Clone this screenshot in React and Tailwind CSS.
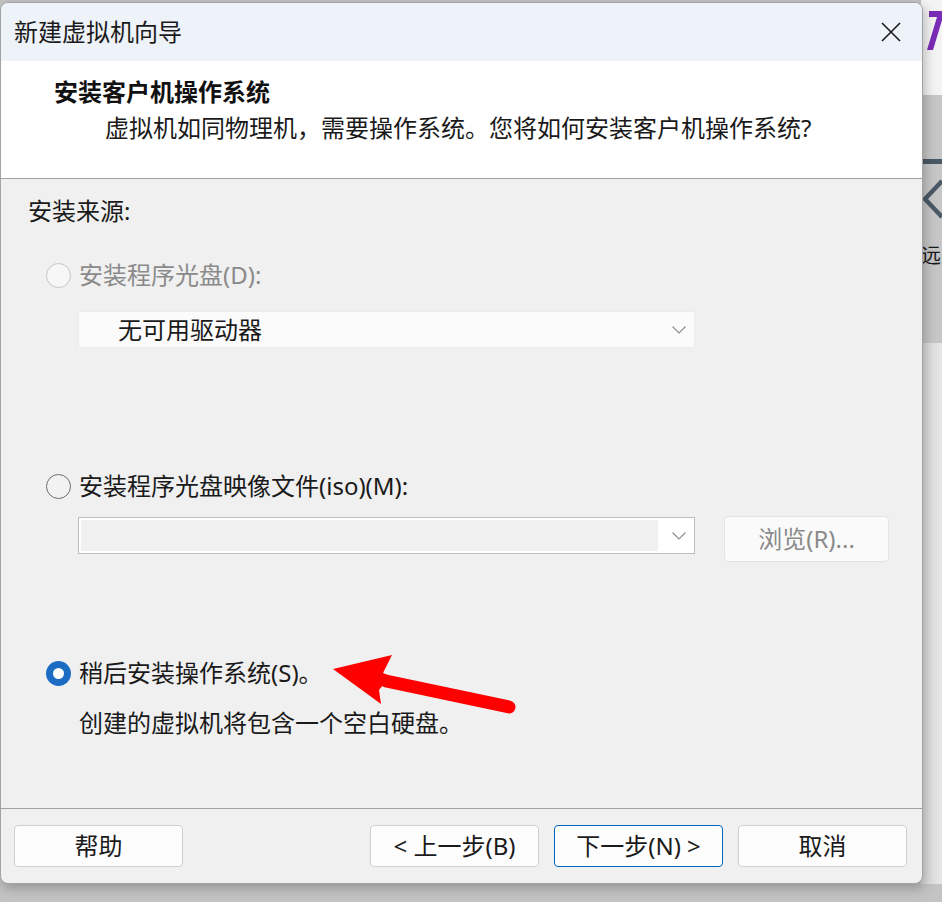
import React from "react";

function Radio({ state }) {
  if (state === "selected") {
    return (
      <span className="w-[25px] h-[25px] rounded-full bg-[#1d6cc4] flex items-center justify-center shrink-0">
        <span className="w-[11px] h-[11px] rounded-full bg-white" />
      </span>
    );
  }
  if (state === "disabled") {
    return <span className="w-[25px] h-[25px] rounded-full border-[1.5px] border-[#c6c6c6] bg-[#f7f7f7] shrink-0" />;
  }
  return <span className="w-[25px] h-[25px] rounded-full border-[1.5px] border-[#6e6e6e] bg-[#f2f2f2] shrink-0" />;
}

function Chevron() {
  return (
    <svg width="14" height="8" viewBox="0 0 14 8" className="shrink-0">
      <polyline points="0.5,0.5 7,7 13.5,0.5" fill="none" stroke="#8c8c8c" strokeWidth="1.1" />
    </svg>
  );
}

function Btn({ children, primary }) {
  return (
    <div
      className={
        "h-[42px] w-[169px] rounded-[4px] bg-[#fdfdfd] flex items-center justify-center text-[24px] text-[#1a1a1a] " +
        (primary ? "border border-[#0067c0]" : "border border-[#d0d0d0]")
      }
    >
      {children}
    </div>
  );
}

export default function App() {
  return (
    <div className="relative w-[942px] h-[902px] overflow-hidden bg-[#c3c3c3] font-['Noto_Sans','Noto_Sans_CJK_SC',sans-serif]">
      <div className="flex items-start">
        {/* dialog */}
        <div className="mt-[2px] w-[923px] h-[882px] shrink-0 rounded-[8px] border border-[#a3a3a3] bg-[#f0f0f0] overflow-hidden flex flex-col shadow-[2px_4px_12px_rgba(0,0,0,0.25)] relative z-10">
          {/* title bar */}
          <div className="h-[58px] shrink-0 bg-[#eef2f9] flex items-center justify-between pl-[13px] pr-[21px]">
            <span className="text-[24px] text-[#1a1a1a]">新建虚拟机向导</span>
            <svg width="20" height="20" viewBox="0 0 20 20">
              <path d="M1 1 L19 19 M19 1 L1 19" stroke="#1a1a1a" strokeWidth="1.6" />
            </svg>
          </div>
          {/* header */}
          <div className="h-[118px] shrink-0 bg-white flex flex-col border-b border-[#a0a0a0]">
            <div className="h-[28px] mt-[17px] flex items-center pl-[53px] text-[24px] font-bold text-[#111]">安装客户机操作系统</div>
            <div className="h-[28px] mt-[8px] flex items-center pl-[104px] text-[24px] text-[#1a1a1a]">
              虚拟机如同物理机，需要操作系统。您将如何安装客户机操作系统?
            </div>
          </div>
          {/* body */}
          <div className="h-[630px] shrink-0 flex flex-col text-[24px] text-[#1a1a1a] border-b border-[#a0a0a0]">
            <div className="h-[64px] flex items-center pl-[27px]">安装来源:</div>
            <div className="h-[64px] flex items-center pl-[45px] gap-[8px]">
              <Radio state="disabled" />
              <span className="text-[#8a8a8a]">安装程序光盘(D):</span>
            </div>
            <div className="mt-[4px] ml-[77px] w-[617px] h-[37px] bg-[#fbfbfb] border border-[#ececec] flex items-center justify-between pl-[39px] pr-[8px]">
              <span>无可用驱动器</span>
              <Chevron />
            </div>
            <div className="h-[119px]" />
            <div className="h-[38px] flex items-center pl-[45px] gap-[8px]">
              <Radio state="normal" />
              <span>安装程序光盘映像文件(iso)(M):</span>
            </div>
            <div className="h-[11px]" />
            <div className="h-[46px] flex items-start pl-[77px]">
              <div className="mt-[1px] w-[617px] h-[37px] bg-white border border-[#bdbdbd] flex items-center pr-[8px]">
                <div className="ml-[2px] h-[31px] w-[577px] bg-[#f0f0f0]" />
                <div className="flex-1 flex justify-end">
                  <Chevron />
                </div>
              </div>
              <div className="ml-[29px] w-[165px] h-[46px] rounded-[4px] bg-[#fafafa] border border-[#e3e3e3] flex items-center justify-center text-[#8a8a8a]">
                浏览(R)...
              </div>
            </div>
            <div className="h-[92px]" />
            <div className="h-[38px] flex items-center pl-[45px] gap-[8px]">
              <Radio state="selected" />
              <span>稍后安装操作系统(S)。</span>
            </div>
            <div className="h-[12px]" />
            <div className="h-[38px] flex items-center pl-[78px]">创建的虚拟机将包含一个空白硬盘。</div>
          </div>
          {/* footer */}
          <div className="flex-1 flex items-start pt-[16px] pl-[13px]">
            <Btn>帮助</Btn>
            <div className="ml-[187px]">
              <Btn>&lt; 上一步(B)</Btn>
            </div>
            <div className="ml-[15px]">
              <Btn primary>下一步(N) &gt;</Btn>
            </div>
            <div className="ml-[15px]">
              <Btn>取消</Btn>
            </div>
          </div>
        </div>
        {/* background window strip */}
        <div className="flex-1 h-[884px] flex flex-col overflow-hidden -ml-[2px]">
          <div className="h-[95px] bg-[#f4f4f4] relative">
            <svg width="22" height="60" viewBox="0 0 22 60" className="absolute left-0 top-0">
              <polygon points="8,11 22,11 22,17 12,50 6,50 16,17 8,17" fill="#7b2cb6" />
            </svg>
          </div>
          <div className="h-[248px] bg-[#c6c6c6] flex flex-col">
            <div className="mt-[64px] h-[5px] bg-[#4a5966]" />
            <svg width="22" height="44" viewBox="0 0 22 44" className="mt-[14px] ml-[1px]">
              <polyline points="20,3 3,21 20,39" fill="none" stroke="#4a5966" strokeWidth="4.5" />
            </svg>
            <div className="mt-[24px] text-[20px] text-[#1a1a1a] leading-none whitespace-nowrap">远</div>
          </div>
          <div className="flex-1 bg-gradient-to-r from-[#d8d8d8] to-[#e6e6e6]" />
        </div>
      </div>
      {/* red annotation arrow */}
      <svg width="942" height="902" className="absolute left-0 top-0 pointer-events-none z-20">
        <line x1="386" y1="681" x2="509" y2="707" stroke="#ff0000" strokeWidth="13" strokeLinecap="round" />
        <polygon points="333,669 392,655 383,673 390,676 379,690 381,704" fill="#ff0000" />
      </svg>
    </div>
  );
}
